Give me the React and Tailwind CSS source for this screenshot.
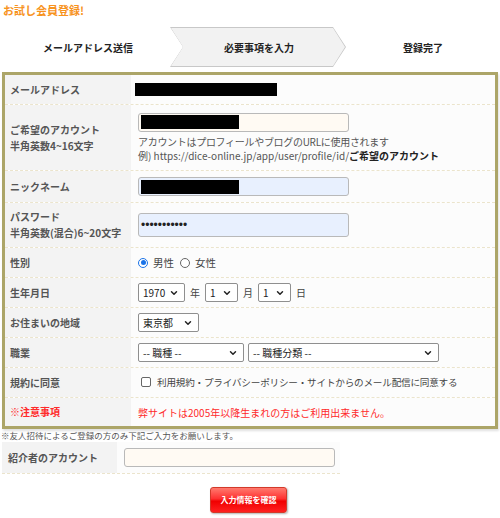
import { ChevronDown } from 'lucide-react'

function Select({ value, width, className = '' }) {
  return (
    <div className={`flex items-center justify-between h-[19px] border border-[#8f8f8f] rounded-[2px] bg-white pl-[4px] pr-[5px] text-[10px] text-[#222] ${width} ${className}`}>
      <span>{value}</span>
      <ChevronDown size={10} strokeWidth={3.5} className="text-[#222]" />
    </div>
  )
}

function Row({ label, h, children, red, last }) {
  return (
    <div className={`grid grid-cols-[126px_1fr] ${h} ${last ? '' : 'border-b border-dashed border-[#ebe4cc]'}`}>
      <div className={`bg-[#f3f3f3] flex items-center pl-[5px] text-[10px] font-bold leading-[16px] ${red ? 'text-[#ff2a2a]' : 'text-[#555]'}`}>
        {label}
      </div>
      <div className="bg-[#fcfcfc] flex items-center pl-[7px] text-[10px] text-[#444]">{children}</div>
    </div>
  )
}

function Radio({ checked, label }) {
  return (
    <span className="flex items-center gap-[5px] mr-[6px]">
      {checked ? (
        <span className="w-[10px] h-[10px] rounded-full border-[1.5px] border-[#1a73e8] bg-white flex items-center justify-center">
          <span className="w-[5px] h-[5px] rounded-full bg-[#1a73e8]"></span>
        </span>
      ) : (
        <span className="w-[10px] h-[10px] rounded-full border border-[#666] bg-white"></span>
      )}
      <span className="text-[10.5px] text-[#444]">{label}</span>
    </span>
  )
}

export default function App() {
  const input = 'w-[211px] h-[19px] border border-[#b9b9b9] rounded-[3px] flex items-center pl-[2px]'

  return (
    <main className="w-[500px] h-[518px] bg-white font-['Noto_Sans_CJK_JP',sans-serif] overflow-hidden">
      <div className="pl-[3px] pt-[2px] h-[27px] text-[11px] font-bold text-[#f7931e] leading-[16px]">お試し会員登録!</div>

      <div className="flex h-[40px] items-center">
        <div className="w-[170px] flex justify-center pl-[6px] text-[10px] font-bold text-[#222]">メールアドレス送信</div>
        <div className="w-[176px] h-[40px] bg-[#c8c8c8] [clip-path:polygon(0_0,163px_0,176px_50%,163px_100%,0_100%,13px_50%)] p-px">
          <div className="w-full h-full bg-[#f2f2f2] [clip-path:polygon(0_0,162px_0,174px_50%,162px_100%,0_100%,12px_50%)] flex items-center justify-center pl-[2px] text-[10px] font-bold text-[#222]">
            必要事項を入力
          </div>
        </div>
        <div className="flex-1 flex justify-center text-[10px] font-bold text-[#222]">登録完了</div>
      </div>

      <div className="mt-[5px] mx-[2px] border-[3px] border-[#aca568] shadow-[1px_2px_2px_rgba(0,0,0,0.12)]">
        <Row label="メールアドレス" h="h-[30px]">
          <div className="w-[142px] h-[13px] bg-black -ml-[3px]"></div>
        </Row>
        <Row label={<span>ご希望のアカウント<br />半角英数4~16文字</span>} h="h-[66px]">
          <div className="flex flex-col">
            <div className={`${input} bg-[#fffaf3]`}>
              <div className="w-[98px] h-[14px] bg-black"></div>
            </div>
            <div className="mt-[3px] leading-[14px] text-[#555] tracking-[-0.3px]">アカウントはプロフィールやブログのURLに使用されます</div>
            <div className="leading-[14px] text-[#555]">例) https://dice-online.jp/app/user/profile/id/<span className="font-bold text-[#222]">ご希望のアカウント</span></div>
          </div>
        </Row>
        <Row label="ニックネーム" h="h-[32px]">
          <div className={`${input} bg-[#e8f0fe]`}>
            <div className="w-[98px] h-[14px] bg-black"></div>
          </div>
        </Row>
        <Row label={<span>パスワード<br />半角英数(混合)6~20文字</span>} h="h-[45px]">
          <div className={`${input} h-[24px] bg-[#e8f0fe] font-['Liberation_Sans',sans-serif] text-[12px] text-[#222]`}>•••••••••••</div>
        </Row>
        <Row label="性別" h="h-[30px]">
          <div className="flex items-center">
            <Radio checked label="男性" />
            <Radio label="女性" />
          </div>
        </Row>
        <Row label="生年月日" h="h-[30px]">
          <div className="flex items-center gap-[5px]">
            <Select value="1970" width="w-[47px]" />
            <span>年</span>
            <Select value="1" width="w-[33px]" />
            <span>月</span>
            <Select value="1" width="w-[33px]" />
            <span>日</span>
          </div>
        </Row>
        <Row label="お住まいの地域" h="h-[30px]">
          <Select value="東京都" width="w-[61px]" />
        </Row>
        <Row label="職業" h="h-[30px]">
          <div className="flex items-center gap-[4px]">
            <Select value="-- 職種 --" width="w-[106px]" />
            <Select value="-- 職種分類 --" width="w-[191px]" />
          </div>
        </Row>
        <Row label="規約に同意" h="h-[30px]">
          <div className="flex items-center gap-[6px] pl-[3px]">
            <span className="w-[10px] h-[10px] border border-[#666] rounded-[2px] bg-white"></span>
            <span className="text-[9.6px] text-[#444] tracking-[-0.2px]">利用規約・プライバシーポリシー・サイトからのメール配信に同意する</span>
          </div>
        </Row>
        <Row label="※注意事項" h="h-[28px]" red last>
          <span className="text-[#ff2a2a]">弊サイトは2005年以降生まれの方はご利用出来ません。</span>
        </Row>
      </div>

      <div className="mt-px pl-[1px] text-[8.5px] text-[#555] leading-[11px]">※友人招待によるご登録の方のみ下記ご入力をお願いします。</div>

      <div className="mt-px ml-[2px] w-[338px] h-[32px] grid grid-cols-[115px_1fr] border-b border-dashed border-[#ebe4cc]">
        <div className="bg-[#f3f3f3] flex items-center pl-[6px] text-[10px] font-bold text-[#555]">紹介者のアカウント</div>
        <div className="bg-[#fcfcfc] flex items-center pl-[7px]">
          <div className={`${input} w-[210px] bg-[#fffaf3]`}></div>
        </div>
      </div>

      <div className="flex justify-center mt-[13px] pr-[3px]">
        <button className="w-[77px] h-[26px] rounded-[3px] border border-[#d23a2a] bg-[linear-gradient(#ff7a6e,#ff3030_45%,#f00000_55%,#ff2020)] shadow-[1px_1px_2px_rgba(0,0,0,0.3)] text-white text-[8px] font-bold">
          入力情報を確認
        </button>
      </div>
    </main>
  )
}
